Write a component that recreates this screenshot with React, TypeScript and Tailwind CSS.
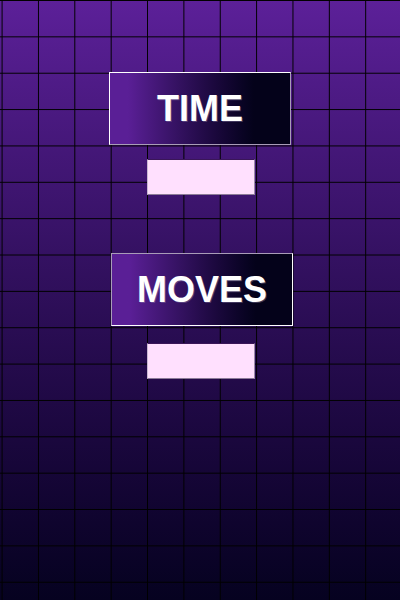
const stats = [
  { label: "TIME", frame: "border-t-white border-l-white border-r-[#a99cb8] border-b-[#a99cb8]", shift: "", gap: "mt-[14px]" },
  { label: "MOVES", frame: "border-t-[#a99cb8] border-l-[#a99cb8] border-r-white border-b-white", shift: "ml-[4px]", gap: "mt-[17px]" },
]

export default function App() {
  return (
    <div className="min-h-screen w-full bg-linear-to-b from-[#5c2099] to-[#060220] font-['Liberation_Sans',Arial,sans-serif]">
      <div className="min-h-screen w-full [background-image:linear-gradient(to_right,#000_1.25px,transparent_1.25px),linear-gradient(to_bottom,#000_1.25px,transparent_1.25px)] [background-size:36.36px_36.36px] [background-position:1.6px_0]">
        <div className="flex flex-col items-center pt-[72px]">
          {stats.map((s, i) => (
            <div key={s.label} className={`flex flex-col items-center ${i > 0 ? "mt-[58px]" : ""}`}>
              <div
                className={`flex h-[73px] w-[182px] items-center justify-center border bg-linear-to-r from-[#5a1f96] from-10% to-[#04021a] to-80% ${s.frame} ${s.shift}`}
              >
                <span className="text-[36px] leading-none font-bold text-white [text-shadow:1px_1px_0_rgba(150,140,180,0.4)]">
                  {s.label}
                </span>
              </div>
              <div
                className={`${s.gap} ml-[2px] h-[36px] w-[108px] border border-t-[#3a1658] border-l-[#c9b8d2] border-r-[#9a8aa6] border-b-[#8c7b98] bg-[#ffe0fe]`}
              />
            </div>
          ))}
        </div>
      </div>
    </div>
  )
}
